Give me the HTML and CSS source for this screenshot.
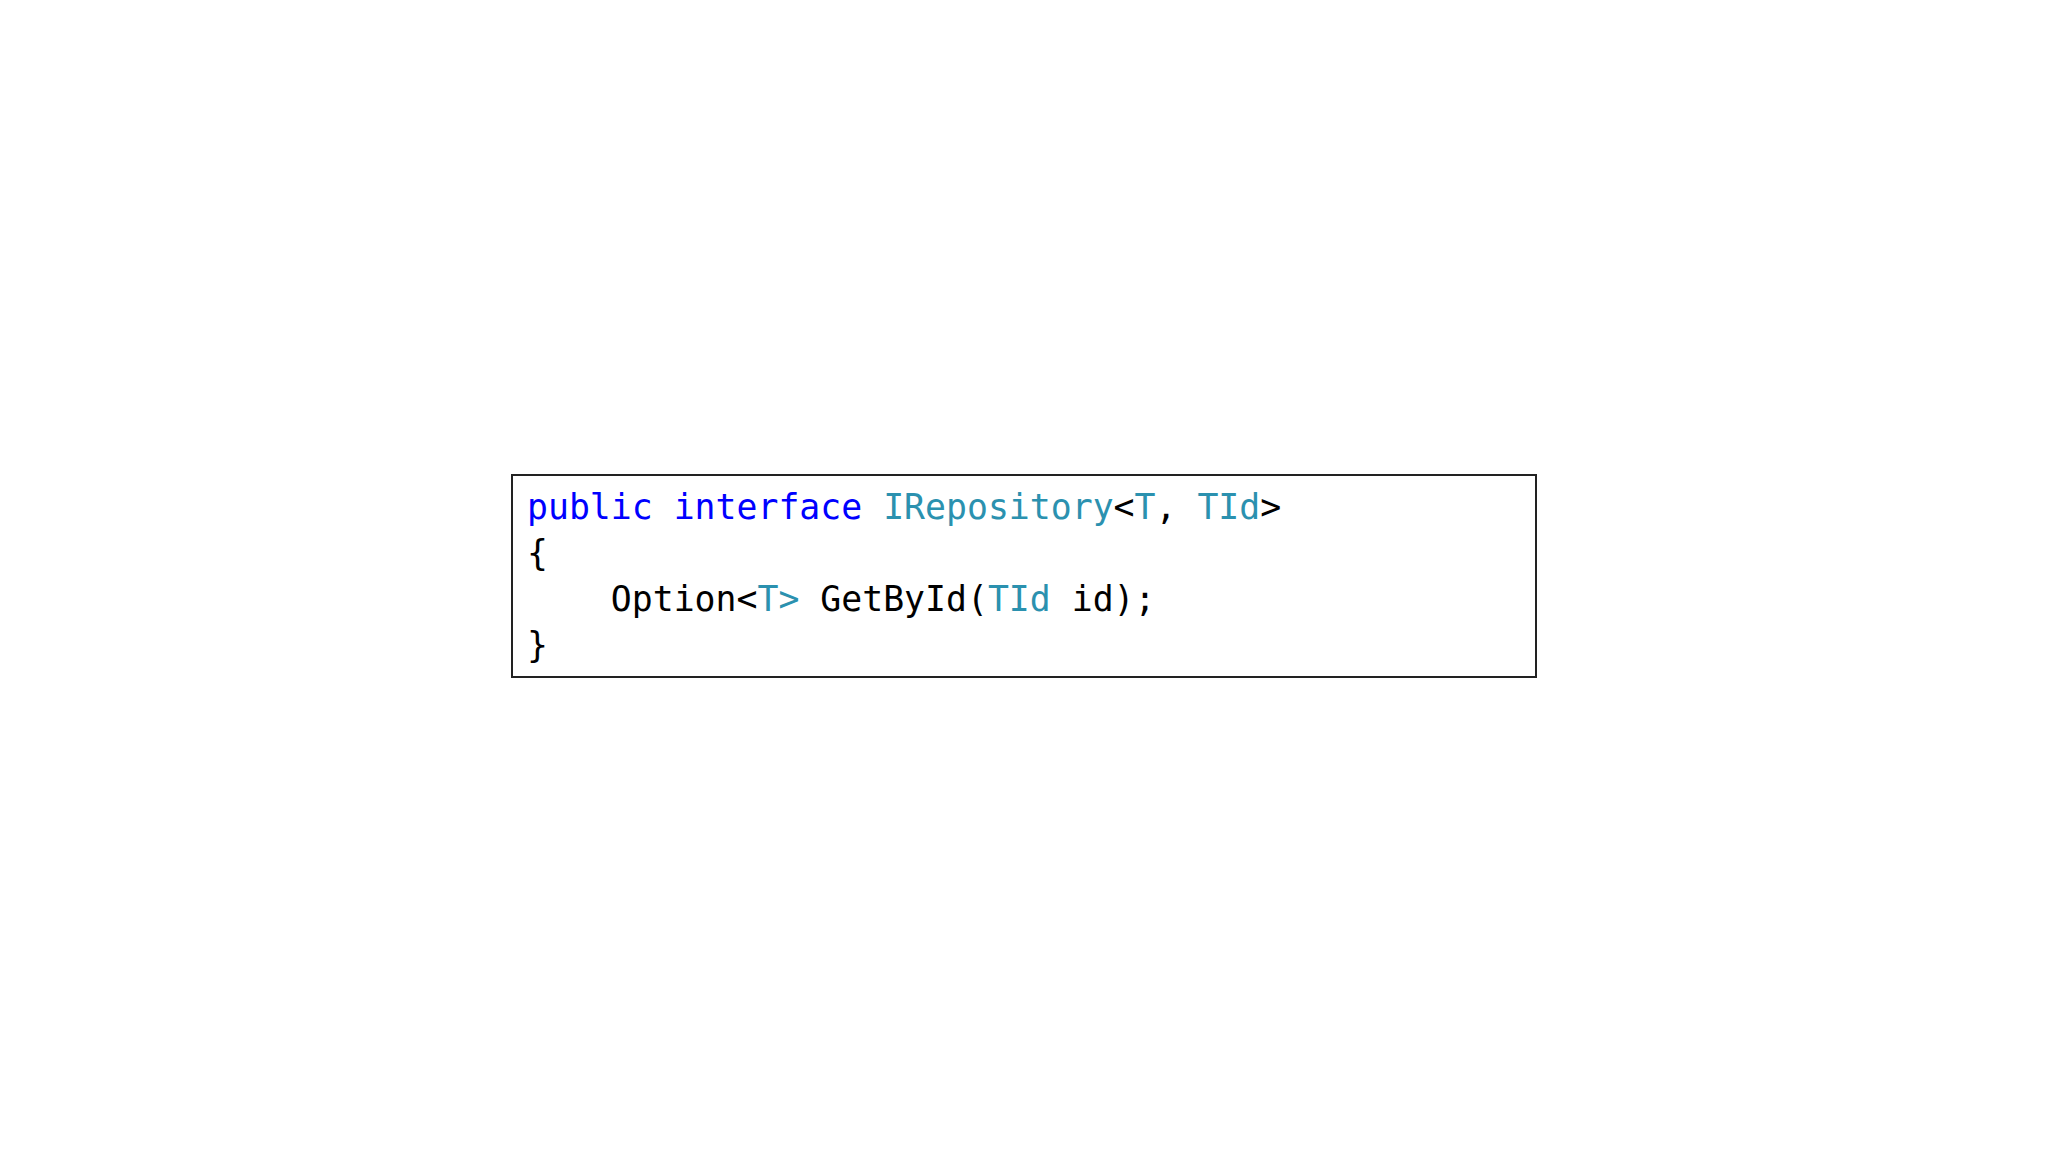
FILE: index.html
```html
<!DOCTYPE html>
<html>
<head>
<meta charset="utf-8">
<link rel="stylesheet" href="styles.css">
</head>
<body>
<main class="stage">
<pre class="code"><span class="kw">public</span> <span class="kw">interface</span> <span class="ty">IRepository</span>&lt;<span class="ty">T</span>, <span class="ty">TId</span>&gt;
{
    Option&lt;<span class="ty">T&gt;</span> GetById(<span class="ty">TId</span> id);
}</pre>
</main>
</body>
</html>
```
FILE: styles.css
```css
html, body {
  margin: 0;
  padding: 0;
  background: #ffffff;
}
.stage {
  width: 100vw;
  height: 100vh;
  display: flex;
  align-items: center;
  justify-content: center;
}
.code {
  box-sizing: border-box;
  width: 1026px;
  height: 204px;
  margin: 0;
  padding: 8px 14px;
  border: 2px solid #222222;
  font-family: "DejaVu Sans Mono", "Liberation Mono", monospace;
  font-size: 34.8px;
  line-height: 46px;
  color: #000000;
  background: #ffffff;
}
.kw { color: #0000ff; }
.ty { color: #2b91af; }
```
